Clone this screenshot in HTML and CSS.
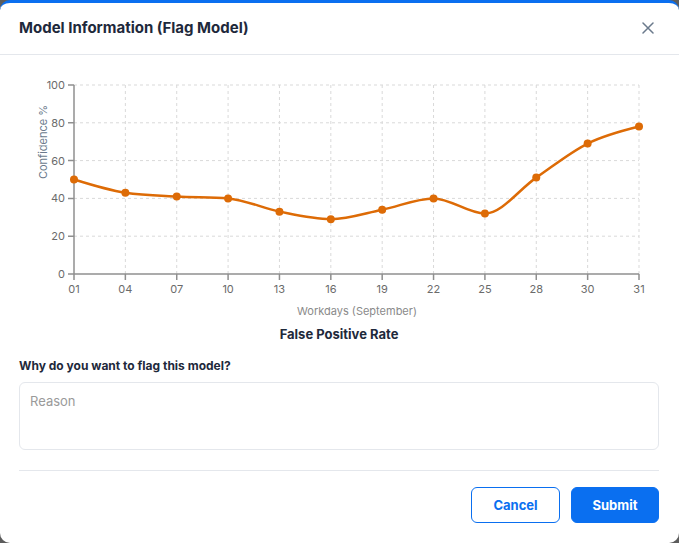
FILE: index.html
```html
<!DOCTYPE html>
<html lang="en">
<head>
<meta charset="utf-8">
<title>Model Information</title>
<link rel="stylesheet" href="styles.css">
</head>
<body>
<div class="modal">
  <header class="modal-header">
    <h1 class="modal-title">Model Information (Flag Model)</h1>
    <button class="close-btn" aria-label="Close">
      <svg width="12" height="12" viewBox="0 0 12 12"><path d="M1 1L11 11M11 1L1 11" stroke="#6b7a8c" stroke-width="1.5" stroke-linecap="round"/></svg>
    </button>
  </header>
  <svg class="chart" width="679" height="290" viewBox="0 55 679 290">
    <g class="grid">
      <line x1="74" y1="85" x2="639" y2="85"/>
      <line x1="74" y1="122.8" x2="639" y2="122.8"/>
      <line x1="74" y1="160.6" x2="639" y2="160.6"/>
      <line x1="74" y1="198.4" x2="639" y2="198.4"/>
      <line x1="74" y1="236.2" x2="639" y2="236.2"/>
      <line x1="125.36" y1="85" x2="125.36" y2="274"/>
      <line x1="176.73" y1="85" x2="176.73" y2="274"/>
      <line x1="228.09" y1="85" x2="228.09" y2="274"/>
      <line x1="279.45" y1="85" x2="279.45" y2="274"/>
      <line x1="330.82" y1="85" x2="330.82" y2="274"/>
      <line x1="382.18" y1="85" x2="382.18" y2="274"/>
      <line x1="433.55" y1="85" x2="433.55" y2="274"/>
      <line x1="484.91" y1="85" x2="484.91" y2="274"/>
      <line x1="536.27" y1="85" x2="536.27" y2="274"/>
      <line x1="587.64" y1="85" x2="587.64" y2="274"/>
      <line x1="639" y1="85" x2="639" y2="274"/>
    </g>
    <g class="axis">
      <line x1="74" y1="85" x2="74" y2="274"/>
      <line x1="74" y1="274" x2="639" y2="274"/>
      <line x1="68" y1="85" x2="74" y2="85"/>
      <line x1="68" y1="122.8" x2="74" y2="122.8"/>
      <line x1="68" y1="160.6" x2="74" y2="160.6"/>
      <line x1="68" y1="198.4" x2="74" y2="198.4"/>
      <line x1="68" y1="236.2" x2="74" y2="236.2"/>
      <line x1="68" y1="274" x2="74" y2="274"/>
      <line x1="74" y1="274" x2="74" y2="280"/>
      <line x1="125.36" y1="274" x2="125.36" y2="280"/>
      <line x1="176.73" y1="274" x2="176.73" y2="280"/>
      <line x1="228.09" y1="274" x2="228.09" y2="280"/>
      <line x1="279.45" y1="274" x2="279.45" y2="280"/>
      <line x1="330.82" y1="274" x2="330.82" y2="280"/>
      <line x1="382.18" y1="274" x2="382.18" y2="280"/>
      <line x1="433.55" y1="274" x2="433.55" y2="280"/>
      <line x1="484.91" y1="274" x2="484.91" y2="280"/>
      <line x1="536.27" y1="274" x2="536.27" y2="280"/>
      <line x1="587.64" y1="274" x2="587.64" y2="280"/>
      <line x1="639" y1="274" x2="639" y2="280"/>
    </g>
    <g class="ytick">
      <text x="65" y="89">100</text>
      <text x="65" y="126.8">80</text>
      <text x="65" y="164.6">60</text>
      <text x="65" y="202.4">40</text>
      <text x="65" y="240.2">20</text>
      <text x="65" y="278">0</text>
    </g>
    <g class="xtick">
      <text x="74" y="293">01</text>
      <text x="125.36" y="293">04</text>
      <text x="176.73" y="293">07</text>
      <text x="228.09" y="293">10</text>
      <text x="279.45" y="293">13</text>
      <text x="330.82" y="293">16</text>
      <text x="382.18" y="293">19</text>
      <text x="433.55" y="293">22</text>
      <text x="484.91" y="293">25</text>
      <text x="536.27" y="293">28</text>
      <text x="587.64" y="293">30</text>
      <text x="639" y="293">31</text>
    </g>
    <text class="ylabel" transform="translate(47 142) rotate(-90)">Confidence %</text>
    <text class="xlabel" x="357" y="315">Workdays (September)</text>
    <text class="chart-title" x="339" y="339">False Positive Rate</text>
    <path class="line" d="M74,179.5 C91.12,184.85 108.24,190.21 125.36,192.73 C142.48,195.25 159.61,195.57 176.73,196.51 C193.85,197.46 210.97,197.14 228.09,198.4 C245.21,199.66 262.33,208.17 279.45,211.63 C296.57,215.09 313.7,219.19 330.82,219.19 C347.94,219.19 365.06,213.2 382.18,209.74 C399.3,206.28 416.43,198.4 433.55,198.4 C450.67,198.4 467.79,213.52 484.91,213.52 C502.03,213.52 519.15,189.27 536.27,177.61 C553.39,165.95 570.52,152.1 587.64,143.59 C604.76,135.09 621.88,130.83 639,126.58"/>
    <g class="dots">
      <circle cx="74" cy="179.5" r="4"/>
      <circle cx="125.36" cy="192.73" r="4"/>
      <circle cx="176.73" cy="196.51" r="4"/>
      <circle cx="228.09" cy="198.4" r="4"/>
      <circle cx="279.45" cy="211.63" r="4"/>
      <circle cx="330.82" cy="219.19" r="4"/>
      <circle cx="382.18" cy="209.74" r="4"/>
      <circle cx="433.55" cy="198.4" r="4"/>
      <circle cx="484.91" cy="213.52" r="4"/>
      <circle cx="536.27" cy="177.61" r="4"/>
      <circle cx="587.64" cy="143.59" r="4"/>
      <circle cx="639" cy="126.58" r="4"/>
    </g>
  </svg>
  <section class="form">
    <label class="field-label" for="reason">Why do you want to flag this model?</label>
    <textarea id="reason" class="reason" placeholder="Reason"></textarea>
  </section>
  <footer class="modal-footer">
    <button class="btn btn-outline">Cancel</button>
    <button class="btn btn-primary">Submit</button>
  </footer>
</div>
</body>
</html>
```

FILE: styles.css
```css
* { box-sizing: border-box; }
html, body { margin: 0; padding: 0; }
body {
  width: 679px;
  height: 543px;
  background: #5c5c5c;
  font-family: "Inter", "Noto Sans", sans-serif;
  overflow: hidden;
}
.modal {
  width: 679px;
  height: 543px;
  background: #ffffff;
  border-top: 3px solid #0a6ff0;
  border-radius: 10px;
  display: flex;
  flex-direction: column;
  overflow: hidden;
}
.modal-header {
  height: 52px;
  border-bottom: 1px solid #e4e7ec;
  display: flex;
  align-items: center;
  justify-content: space-between;
  padding: 0 25px 2px 19px;
}
.modal-title {
  margin: 0;
  font-size: 15px;
  font-weight: 700;
  color: #1e293b;
  letter-spacing: 0;
}
.close-btn {
  border: 0;
  background: none;
  padding: 0;
  width: 12px;
  height: 12px;
  display: flex;
}
.chart { display: block; flex: none; }
.grid line { stroke: #d9d9d9; stroke-width: 1; stroke-dasharray: 3 3; }
.axis line { stroke: #8f8f8f; stroke-width: 1.5; }
.ytick text { font-size: 11px; fill: #6b6b6b; text-anchor: end; font-family: "Inter", sans-serif; }
.xtick text { font-size: 11px; fill: #6b6b6b; text-anchor: middle; font-family: "Inter", sans-serif; }
.ylabel { font-size: 11px; fill: #6b7a8c; text-anchor: middle; font-family: "Inter", sans-serif; }
.xlabel { font-size: 11px; fill: #8a8a8a; text-anchor: middle; font-family: "Inter", sans-serif; }
.chart-title { font-size: 13px; font-weight: 700; fill: #1e293b; text-anchor: middle; font-family: "Inter", sans-serif; }
.line { fill: none; stroke: #dd6b06; stroke-width: 2.5; }
.dots circle { fill: #dd6b06; }
.form {
  padding: 13px 20px 0 19px;
  display: flex;
  flex-direction: column;
}
.field-label {
  font-size: 12px;
  font-weight: 700;
  color: #1e293b;
  line-height: 16px;
}
.reason {
  margin-top: 8px;
  height: 68px;
  border: 1px solid #e4e7ec;
  border-radius: 6px;
  padding: 10px 10px;
  font-family: "Inter", sans-serif;
  font-size: 13px;
  resize: none;
  outline: none;
}
.reason::placeholder { color: #9a9a9a; }
.modal-footer {
  margin: 20px 20px 0 19px;
  border-top: 1px solid #e4e7ec;
  padding-top: 16px;
  display: flex;
  justify-content: flex-end;
  gap: 11px;
}
.btn {
  height: 36px;
  border-radius: 6px;
  font-family: "Inter", sans-serif;
  font-size: 13px;
  font-weight: 700;
  padding: 0;
}
.btn-outline {
  width: 89px;
  background: #ffffff;
  border: 1px solid #0a6ff0;
  color: #0a6ff0;
}
.btn-primary {
  width: 88px;
  background: #0a6ff0;
  border: 1px solid #0a6ff0;
  color: #ffffff;
}
```
